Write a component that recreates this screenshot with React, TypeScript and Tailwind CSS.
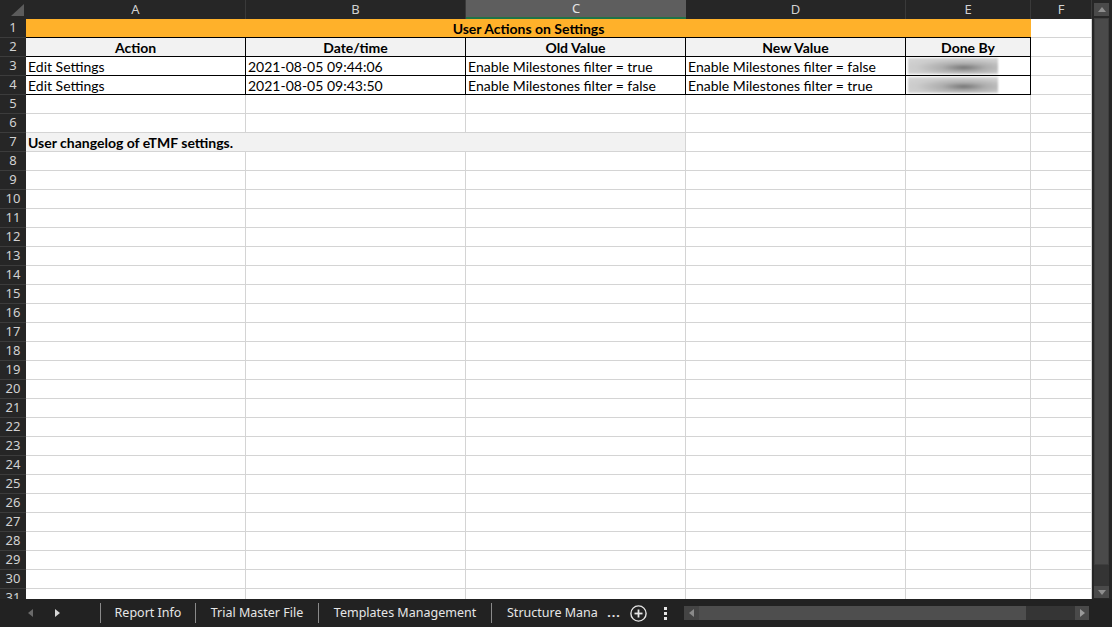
import React from "react";

const font = "font-['Lato','Liberation_Sans',sans-serif]";
const uiFont = "font-['Noto_Sans','Open_Sans',sans-serif]";

const cols = [
  { key: "A", w: "w-[220px]" },
  { key: "B", w: "w-[220px]" },
  { key: "C", w: "w-[220px]" },
  { key: "D", w: "w-[220px]" },
  { key: "E", w: "w-[125px]" },
  { key: "F", w: "w-[61px]" },
];

function RowHeader({ n }: { n: number }) {
  return (
    <div
      className={`w-[26px] shrink-0 h-full flex items-center justify-center bg-[#262626] border-b border-[#3c3c3c] text-[13px] text-[#d2d2d2] ${uiFont}`}
    >
      {n}
    </div>
  );
}

function Cell({
  w,
  dark = false,
  className = "",
  children,
}: {
  w: string;
  dark?: boolean;
  className?: string;
  children?: React.ReactNode;
}) {
  return (
    <div
      className={`${w} shrink-0 h-full border-r border-b ${
        dark ? "border-black" : "border-[#d4d4d4]"
      } flex items-center overflow-hidden whitespace-nowrap text-[14px] text-black ${font} ${className}`}
    >
      {children}
    </div>
  );
}

function Blurred() {
  return (
    <div className="ml-[2px] w-[90px] h-[16px] blur-[1.2px] bg-[radial-gradient(ellipse_at_62%_60%,#737373_0%,#adadad_28%,#cbcbcb_60%,#d6d6d6_100%)]" />
  );
}

function Row({ n, children }: { n: number; children?: React.ReactNode }) {
  return (
    <div className="flex h-[19px] shrink-0">
      <RowHeader n={n} />
      {children ??
        cols.map((c) => <Cell key={c.key} w={c.w} />)}
    </div>
  );
}

const data = [
  ["Edit Settings", "2021-08-05 09:44:06", "Enable Milestones filter = true", "Enable Milestones filter = false"],
  ["Edit Settings", "2021-08-05 09:43:50", "Enable Milestones filter = false", "Enable Milestones filter = true"],
];

function Sheet() {
  const rest = Array.from({ length: 24 }, (_, i) => i + 8);
  return (
    <div className="w-[1092px] h-[599px] flex flex-col overflow-hidden bg-white">
      {/* column headers */}
      <div className={`flex h-[19px] shrink-0 bg-[#262626] text-[13px] ${uiFont}`}>
        <div className="w-[26px] shrink-0 flex items-end justify-end pr-[2px] pb-[3px]">
          <svg width="13" height="12" viewBox="0 0 13 12">
            <polygon points="13,0 13,12 0,12" fill="#5c5c5c" />
          </svg>
        </div>
        {cols.map((c) =>
          c.key === "C" ? (
            <div
              key={c.key}
              className={`${c.w} shrink-0 flex items-center justify-center bg-[#5e5e5e] border-b-2 border-[#217346] text-[#e6e6e6]`}
            >
              {c.key}
            </div>
          ) : (
            <div
              key={c.key}
              className={`${c.w} shrink-0 flex items-center justify-center border-r border-[#3a3a3a] text-[#d2d2d2]`}
            >
              {c.key}
            </div>
          )
        )}
      </div>

      <Row n={1}>
        <div className="w-[1005px] shrink-0 h-full border-b border-black bg-[#ffb12a] flex items-center justify-center text-[14px] font-bold text-black font-['Lato','Liberation_Sans',sans-serif]">
          User Actions on Settings
        </div>
        <Cell w="w-[61px]" />
      </Row>

      <Row n={2}>
        {["Action", "Date/time", "Old Value", "New Value", "Done By"].map((t, i) => (
          <Cell key={t} w={cols[i].w} dark className="justify-center font-bold bg-[#f2f2f2]">
            {t}
          </Cell>
        ))}
        <Cell w="w-[61px]" />
      </Row>

      {data.map((r, ri) => (
        <Row key={ri} n={3 + ri}>
          {r.map((t, i) => (
            <Cell key={i} w={cols[i].w} dark className="pl-[2px]">
              {t}
            </Cell>
          ))}
          <Cell w="w-[125px]" dark>
            <Blurred />
          </Cell>
          <Cell w="w-[61px]" />
        </Row>
      ))}

      <Row n={5} />
      <Row n={6} />

      <Row n={7}>
        <div className="w-[660px] shrink-0 h-full border-r border-b border-[#d4d4d4] bg-[#f2f2f2] flex items-center pl-[2px] text-[14px] font-bold text-black font-['Lato','Liberation_Sans',sans-serif]">
          User changelog of eTMF settings.
        </div>
        <Cell w="w-[220px]" />
        <Cell w="w-[125px]" />
        <Cell w="w-[61px]" />
      </Row>

      {rest.map((n) => (
        <Row key={n} n={n} />
      ))}
    </div>
  );
}

function VScroll() {
  return (
    <div className="w-[20px] h-[599px] pl-[2px] flex flex-col">
      <div className="w-[15px] h-full flex flex-col pt-[3px] pb-[1px]">
        <div className="h-[13px] bg-[#4a4a4a] flex items-center justify-center">
          <svg width="8" height="5" viewBox="0 0 8 5">
            <polygon points="4,0 8,5 0,5" fill="#8e8e8e" />
          </svg>
        </div>
        <div className="mt-[2px] h-[547px] bg-[#4a4a4a] border border-[#3e3e3e]" />
        <div className="flex-1 bg-[#343434]" />
        <div className="h-[12px] bg-[#4a4a4a] flex items-center justify-center">
          <svg width="8" height="5" viewBox="0 0 8 5">
            <polygon points="0,0 8,0 4,5" fill="#8e8e8e" />
          </svg>
        </div>
      </div>
    </div>
  );
}

function Sep() {
  return <div className="w-px h-[20px] bg-[#8a8a8a] shrink-0" />;
}

function TabBar() {
  return (
    <div className={`h-[28px] flex items-center bg-[#222222] text-[12.5px] text-[#e6e6e6] ${uiFont}`}>
      <div className="w-[100px] shrink-0 flex items-center">
        <svg className="ml-[28px]" width="5" height="8" viewBox="0 0 5 8">
          <polygon points="5,0 5,8 0,4" fill="#6a6a6a" />
        </svg>
        <svg className="ml-[22px]" width="5" height="8" viewBox="0 0 5 8">
          <polygon points="0,0 5,4 0,8" fill="#d6d6d6" />
        </svg>
      </div>
      <Sep />
      <div className="w-[94px] shrink-0 text-center">Report Info</div>
      <Sep />
      <div className="w-[122px] shrink-0 text-center">Trial Master File</div>
      <Sep />
      <div className="w-[172px] shrink-0 text-center">Templates Management</div>
      <Sep />
      <div className="w-[106px] shrink-0 pl-[15px] overflow-hidden whitespace-nowrap">Structure Management</div>
      <div className="w-[32px] shrink-0 text-center font-bold tracking-[1px]">...</div>
      <svg className="shrink-0" width="17" height="17" viewBox="0 0 17 17">
        <circle cx="8.5" cy="8.5" r="7.6" fill="none" stroke="#e6e6e6" strokeWidth="1.4" />
        <line x1="8.5" y1="4.5" x2="8.5" y2="12.5" stroke="#e6e6e6" strokeWidth="1.8" />
        <line x1="4.5" y1="8.5" x2="12.5" y2="8.5" stroke="#e6e6e6" strokeWidth="1.8" />
      </svg>
      <div className="w-[37px] shrink-0 flex justify-center">
        <svg width="3" height="13" viewBox="0 0 3 13">
          <rect x="0" y="0" width="3" height="3" fill="#e6e6e6" />
          <rect x="0" y="5" width="3" height="3" fill="#e6e6e6" />
          <rect x="0" y="10" width="3" height="3" fill="#e6e6e6" />
        </svg>
      </div>
      <div className="w-[405px] h-[14px] shrink-0 flex">
        <div className="w-[15px] h-full bg-[#444444] flex items-center justify-center">
          <svg width="5" height="8" viewBox="0 0 5 8">
            <polygon points="5,0 5,8 0,4" fill="#8a8a8a" />
          </svg>
        </div>
        <div className="w-[327px] h-full bg-[#4e4e4e]" />
        <div className="w-[49px] h-full bg-[#353535]" />
        <div className="w-[14px] h-full bg-[#4a4a4a] flex items-center justify-center">
          <svg width="5" height="8" viewBox="0 0 5 8">
            <polygon points="0,0 5,4 0,8" fill="#9a9a9a" />
          </svg>
        </div>
      </div>
    </div>
  );
}

export default function App() {
  return (
    <div className="w-[1112px] h-[627px] bg-[#262626] flex flex-col overflow-hidden">
      <div className="flex">
        <Sheet />
        <VScroll />
      </div>
      <TabBar />
    </div>
  );
}
